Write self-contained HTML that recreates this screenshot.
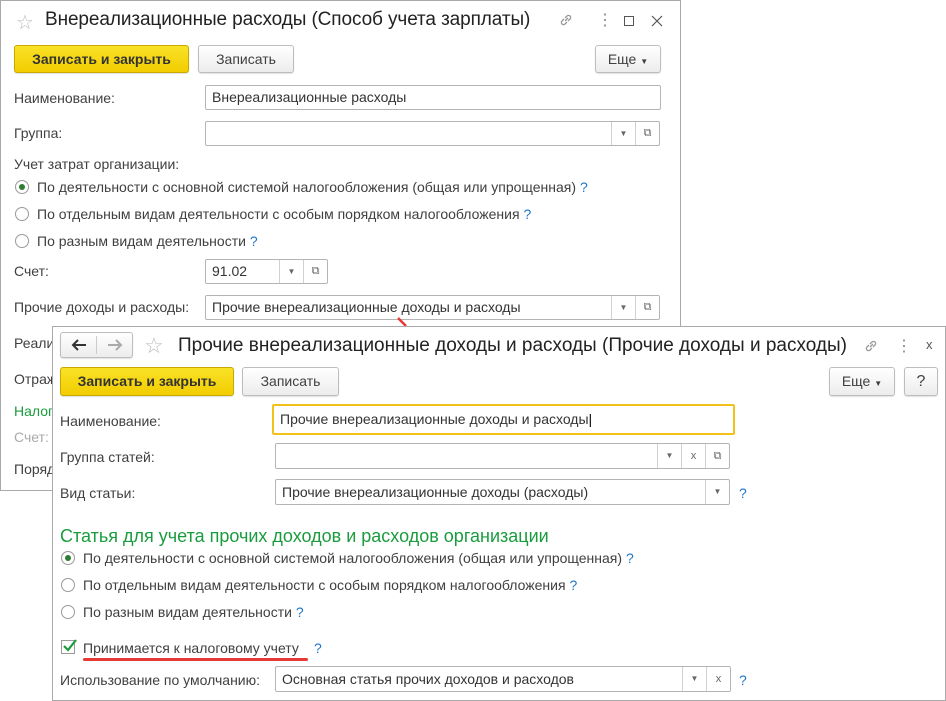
<!DOCTYPE html>
<html><head><meta charset="utf-8"><style>
*{box-sizing:border-box;margin:0;padding:0}
body{width:946px;height:701px;background:#fff;position:relative;overflow:hidden;font-family:"Liberation Sans",sans-serif;font-size:14px;color:#404040}
.a{position:absolute;white-space:nowrap}
.win{position:absolute;background:#fff;border:1px solid #a9a9a9}
.btn{position:absolute;border:1px solid #bdbdbd;border-radius:3px;background:linear-gradient(#fff,#ececec);text-align:center;color:#404040;box-shadow:0 1px 1px rgba(0,0,0,.12)}
.y{background:linear-gradient(#f9e227,#f2cd00);border-color:#c9a900;font-weight:bold;color:#333}
.inp{position:absolute;border:1px solid #b5b5b5;border-radius:2px;background:#fff;color:#333;padding-left:6px}
.dd{position:absolute;top:0;bottom:0;border-left:1px solid #d0d0d0;width:24px;text-align:center;font-size:8px;color:#666}
.rad{position:absolute;width:14px;height:14px;border:1px solid #9a9a9a;border-radius:50%;background:#fff}
.rad.on::after{content:"";position:absolute;left:3px;top:3px;width:6px;height:6px;border-radius:50%;background:#2e7d32}
.q{color:#1f75c9}
</style></head><body>

<div class="win" style="left:0;top:0;width:681px;height:491px;">
 <div class="a" style="left:15px;top:9px;font-size:20px;color:#bbb">☆</div>
 <div class="a" style="left:44px;top:8px;font-size:19px;color:#222;letter-spacing:-0.1px">Внереализационные расходы (Способ учета зарплаты)</div>
 <svg class="a" style="left:557px;top:11px" width="16" height="16" viewBox="0 0 16 16" fill="none" stroke="#999" stroke-width="1.3"><path d="M7 9l3-3M6 7L4 9a2 2 0 003 3l2-2M10 9l2-2a2 2 0 00-3-3L7 6"/></svg>
 <div class="a" style="left:596px;top:9px;font-size:16px;color:#888">⋮</div>
 <div class="a" style="left:623px;top:15px;width:10px;height:10px;border:1px solid #555"></div>
 <svg class="a" style="left:650px;top:14px" width="12" height="12" stroke="#555" stroke-width="1.2"><path d="M1 1l10 10M11 1L1 11"/></svg>
 <div class="btn y" style="left:13px;top:44px;width:175px;height:28px;line-height:26px">Записать и закрыть</div>
 <div class="btn" style="left:197px;top:44px;width:96px;height:28px;line-height:26px">Записать</div>
 <div class="btn" style="left:594px;top:44px;width:66px;height:28px;line-height:26px">Еще <span style="font-size:8px">▼</span></div>
 <div class="a" style="left:13px;top:89px">Наименование:</div>
 <div class="inp" style="left:204px;top:84px;width:456px;height:25px;line-height:23px">Внереализационные расходы</div>
 <div class="a" style="left:13px;top:124px">Группа:</div>
 <div class="inp" style="left:204px;top:120px;width:455px;height:25px"><div class="dd" style="right:24px;line-height:23px">▼</div><div class="dd" style="right:0;line-height:23px;font-size:11px">⧉</div></div>
 <div class="a" style="left:13px;top:155px">Учет затрат организации:</div>
 <div class="rad on" style="left:14px;top:179px"></div><div class="a" style="left:36px;top:178px">По деятельности с основной системой налогообложения (общая или упрощенная) <span class="q">?</span></div>
 <div class="rad" style="left:14px;top:206px"></div><div class="a" style="left:36px;top:205px">По отдельным видам деятельности с особым порядком налогообложения <span class="q">?</span></div>
 <div class="rad" style="left:14px;top:233px"></div><div class="a" style="left:36px;top:232px">По разным видам деятельности <span class="q">?</span></div>
 <div class="a" style="left:13px;top:262px">Счет:</div>
 <div class="inp" style="left:204px;top:258px;width:123px;height:25px;line-height:23px">91.02<div class="dd" style="right:24px;line-height:23px">▼</div><div class="dd" style="right:0;line-height:23px;font-size:11px">⧉</div></div>
 <div class="a" style="left:13px;top:298px">Прочие доходы и расходы:</div>
 <div class="inp" style="left:204px;top:294px;width:455px;height:25px;line-height:23px">Прочие внереализационные доходы и расходы<div class="dd" style="right:24px;line-height:23px">▼</div><div class="dd" style="right:0;line-height:23px;font-size:11px">⧉</div></div>
 <div class="a" style="left:13px;top:334px">Реали</div>
 <div class="a" style="left:13px;top:370px">Отраж</div>
 <div class="a" style="left:13px;top:402px;color:#1a9c3e">Налог</div>
 <div class="a" style="left:13px;top:428px;color:#aaa">Счет:</div>
 <div class="a" style="left:13px;top:460px">Поряд</div>
</div>

<div class="a" style="left:260px;top:318px;font-size:44px;font-weight:bold;color:rgba(200,200,205,.35);letter-spacing:2px">ꝏ БУХЭКСПЕРТ</div>
<svg class="a" style="left:396px;top:316px" width="14" height="14"><path d="M2 2l8 8" stroke="#e53935" stroke-width="2.5"/></svg>

<div class="win" style="left:52px;top:326px;width:894px;height:375px;">
 <div class="btn" style="left:7px;top:5px;width:73px;height:26px"></div>
 <div class="a" style="left:43px;top:9px;height:18px;border-left:1px solid #ccc"></div>
 <svg class="a" style="left:18px;top:11px" width="16" height="14"><path d="M2 7h13M7 2L2 7l5 5" fill="none" stroke="#333" stroke-width="2"/></svg>
 <svg class="a" style="left:54px;top:11px" width="16" height="14"><path d="M1 7h13M9 2l5 5-5 5" fill="none" stroke="#aaa" stroke-width="2"/></svg>
 <div class="a" style="left:91px;top:6px;font-size:22px;color:#bbb">☆</div>
 <div class="a" style="left:125px;top:8px;font-size:19px;color:#222">Прочие внереализационные доходы и расходы (Прочие доходы и расходы)</div>
 <svg class="a" style="left:810px;top:11px" width="16" height="16" viewBox="0 0 16 16" fill="none" stroke="#999" stroke-width="1.3"><path d="M7 9l3-3M6 7L4 9a2 2 0 003 3l2-2M10 9l2-2a2 2 0 00-3-3L7 6"/></svg>
 <div class="a" style="left:843px;top:9px;font-size:16px;color:#888">⋮</div>
 <div class="a" style="left:873px;top:10px;font-size:13px;color:#555">x</div>
 <div class="btn y" style="left:7px;top:40px;width:174px;height:29px;line-height:27px">Записать и закрыть</div>
 <div class="btn" style="left:189px;top:40px;width:97px;height:29px;line-height:27px">Записать</div>
 <div class="btn" style="left:776px;top:40px;width:66px;height:29px;line-height:27px">Еще <span style="font-size:8px">▼</span></div>
 <div class="btn" style="left:851px;top:40px;width:34px;height:29px;line-height:27px;font-size:16px">?</div>
 <div class="a" style="left:7px;top:86px">Наименование:</div>
 <div class="inp" style="left:219px;top:77px;width:463px;height:31px;line-height:27px;border:2px solid #f2c21b">Прочие внереализационные доходы и расходы<span style="color:#000">|</span></div>
 <div class="a" style="left:7px;top:122px">Группа статей:</div>
 <div class="inp" style="left:222px;top:116px;width:455px;height:26px"><div class="dd" style="right:48px;line-height:24px">▼</div><div class="dd" style="right:24px;line-height:24px;font-size:11px">x</div><div class="dd" style="right:0;line-height:24px;font-size:11px">⧉</div></div>
 <div class="a" style="left:7px;top:158px">Вид статьи:</div>
 <div class="inp" style="left:222px;top:152px;width:455px;height:26px;line-height:24px">Прочие внереализационные доходы (расходы)<div class="dd" style="right:0;line-height:24px">▼</div></div>
 <div class="a q" style="left:686px;top:158px">?</div>
 <div class="a" style="left:7px;top:199px;font-size:18px;color:#1a9c3e">Статья для учета прочих доходов и расходов организации</div>
 <div class="rad on" style="left:8px;top:224px"></div><div class="a" style="left:30px;top:223px">По деятельности с основной системой налогообложения (общая или упрощенная) <span class="q">?</span></div>
 <div class="rad" style="left:8px;top:251px"></div><div class="a" style="left:30px;top:250px">По отдельным видам деятельности с особым порядком налогообложения <span class="q">?</span></div>
 <div class="rad" style="left:8px;top:278px"></div><div class="a" style="left:30px;top:277px">По разным видам деятельности <span class="q">?</span></div>
 <div class="a" style="left:8px;top:313px;width:14px;height:14px;border:1px solid #9a9a9a;background:#fff"></div>
 <svg class="a" style="left:9px;top:311px" width="16" height="16"><path d="M2 8l4 4 8-10" fill="none" stroke="#1a9c3e" stroke-width="2.2"/></svg>
 <div class="a" style="left:30px;top:313px">Принимается к налоговому учету</div>
 <div class="a q" style="left:261px;top:313px">?</div>
 <div class="a" style="left:30px;top:331px;width:225px;height:3px;background:#e53935;border-radius:2px"></div>
 <div class="a" style="left:7px;top:345px">Использование по умолчанию:</div>
 <div class="inp" style="left:222px;top:339px;width:456px;height:26px;line-height:24px">Основная статья прочих доходов и расходов<div class="dd" style="right:24px;line-height:24px">▼</div><div class="dd" style="right:0;line-height:24px;font-size:11px">x</div></div>
 <div class="a q" style="left:686px;top:345px">?</div>
</div>
</body></html>
